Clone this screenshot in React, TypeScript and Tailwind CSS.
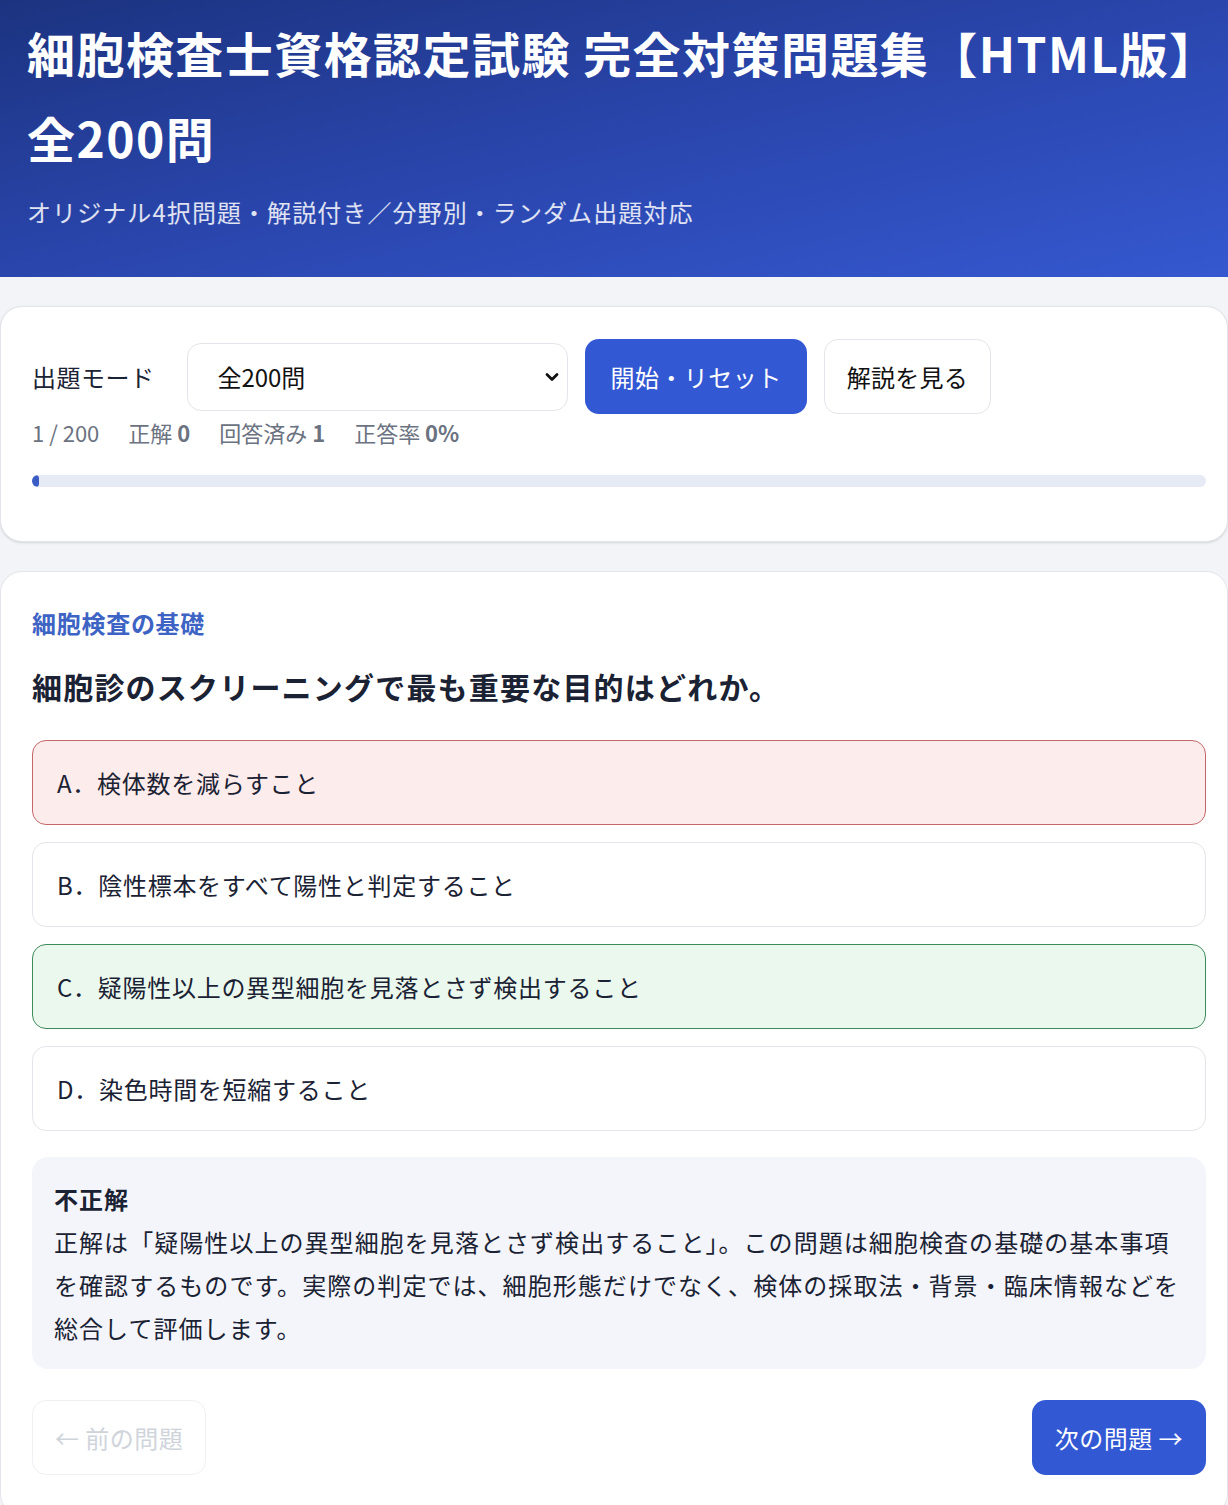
import React from 'react';

const FONT = '"Noto Sans CJK JP", "Noto Sans", sans-serif';

const OPTIONS = [
  { key: 'A', text: '検体数を減らすこと', state: 'wrong' },
  { key: 'B', text: '陰性標本をすべて陽性と判定すること', state: 'none' },
  { key: 'C', text: '疑陽性以上の異型細胞を見落とさず検出すること', state: 'correct' },
  { key: 'D', text: '染色時間を短縮すること', state: 'none' },
];

function optionClass(state: string) {
  if (state === 'wrong') return 'bg-[#fdecec] border-[#c4676a]';
  if (state === 'correct') return 'bg-[#ebf8ee] border-[#3f8a5c]';
  return 'bg-white border-[#e3e5ea]';
}

export default function App() {
  return (
    <div className="min-h-[1505px] bg-[#f3f4f8] text-[#1a2233]" style={{ fontFamily: FONT }}>
      <header className="bg-gradient-to-br from-[#1c3380] via-[#2a46ad] to-[#3558d0] px-[27px] pt-[10px] pb-[47px]">
        <h1 className="text-[48px] font-bold leading-[85px] tracking-[0.03em] text-white">
          細胞検査士資格認定試験 完全対策問題集【HTML版】全200問
        </h1>
        <p className="mt-[14px] text-[24px] leading-[36px] tracking-[0.045em] text-white/85">
          オリジナル4択問題・解説付き／分野別・ランダム出題対応
        </p>
      </header>

      <section className="mt-[29px] rounded-[22px] border border-[#e3e5ea] bg-white pl-[31px] pr-[21px] pt-[32px] pb-[54px] shadow-sm">
        <div className="flex items-center gap-[17px]">
          <span className="mr-[16px] text-[24px] tracking-[0.02em] text-[#1a2233]">出題モード</span>
          <div className="relative">
            <select
              className="h-[68px] w-[381px] appearance-none rounded-[14px] border border-[#e3e5ea] bg-white pl-[29px] text-[24px] text-[#111] outline-none"
              style={{ fontFamily: FONT }}
              defaultValue="all"
            >
              <option value="all">全200問</option>
            </select>
            <svg
              className="pointer-events-none absolute right-[8px] top-1/2 -translate-y-1/2"
              width="16"
              height="16"
              viewBox="0 0 16 16"
              fill="none"
            >
              <path d="M3 5.5l5 5 5-5" stroke="#111" strokeWidth="2.8" strokeLinecap="round" strokeLinejoin="round" />
            </svg>
          </div>
          <button
            type="button"
            className="h-[75px] rounded-[14px] bg-[#3358d4] px-[25px] text-[24px] tracking-[0.02em] text-white"
          >
            開始・リセット
          </button>
          <button
            type="button"
            className="h-[75px] rounded-[14px] border border-[#e3e5ea] bg-white px-[22px] text-[24px] tracking-[0.01em] text-[#111]"
          >
            解説を見る
          </button>
        </div>

        <div className="mt-[2px] flex gap-[29px] text-[22px] leading-[32px] text-[#6b7280]">
          <span>1 / 200</span>
          <span>
            正解 <b className="font-bold">0</b>
          </span>
          <span>
            回答済み <b className="font-bold">1</b>
          </span>
          <span>
            正答率 <b className="font-bold">0%</b>
          </span>
        </div>

        <div className="mt-[27px] h-[12px] w-full overflow-hidden rounded-full bg-[#e6eaf4]">
          <div className="h-full rounded-full bg-[#3a5cc4]" style={{ width: '0.6%' }} />
        </div>
      </section>

      <section className="mt-[29px] rounded-[22px] border border-[#e3e5ea] bg-white pl-[31px] pr-[21px] pt-[33px] pb-[40px]">
        <div className="text-[24px] font-bold leading-[36px] tracking-[0.03em] text-[#3d63c4]">細胞検査の基礎</div>
        <h2 className="mt-[23px] text-[30px] font-bold leading-[45px] tracking-[0.04em] text-[#1a2233]">
          細胞診のスクリーニングで最も重要な目的はどれか。
        </h2>

        <div className="mt-[31px] flex flex-col gap-[17px]">
          {OPTIONS.map((o) => (
            <div
              key={o.key}
              className={`flex h-[85px] items-center rounded-[14px] border-[1.5px] px-6 text-[24px] tracking-[0.03em] text-[#1a2233] ${optionClass(o.state)}`}
            >
              {o.key}．{o.text}
            </div>
          ))}
        </div>

        <div className="mt-[26px] rounded-[16px] bg-[#f3f5fa] px-[22px] pt-[20px] pb-[20px] text-[24px] leading-[43px] tracking-[0.044em] text-[#1a2233]">
          <div className="font-bold">不正解</div>
          <p>
            正解は「疑陽性以上の異型細胞を見落とさず検出すること」。この問題は細胞検査の基礎の基本事項を確認するものです。実際の判定では、細胞形態だけでなく、検体の採取法・背景・臨床情報などを総合して評価します。
          </p>
        </div>

        <div className="mt-[31px] flex items-center justify-between">
          <button
            type="button"
            disabled
            className="h-[75px] rounded-[14px] border border-[#eef0f3] bg-white px-[22px] text-[24px] tracking-[0.02em] text-[#cfd4db]"
          >
            ← 前の問題
          </button>
          <button
            type="button"
            className="h-[75px] rounded-[14px] bg-[#3358d4] px-[23px] text-[24px] tracking-[0.02em] text-white"
          >
            次の問題 →
          </button>
        </div>
      </section>
    </div>
  );
}
